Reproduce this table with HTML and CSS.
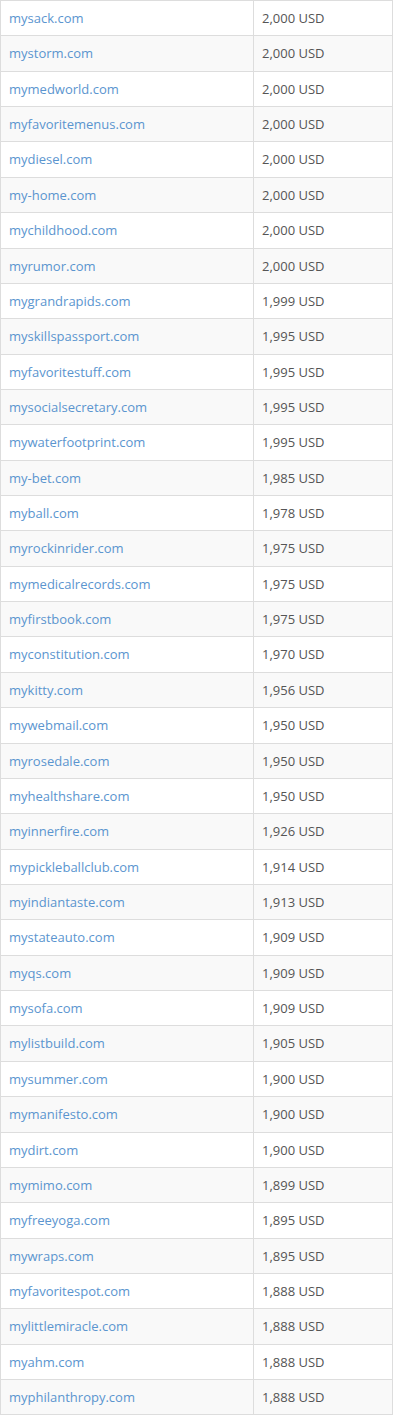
FILE: index.html
```html
<!DOCTYPE html>
<html>
<head>
<meta charset="utf-8">
<link rel="stylesheet" href="styles.css">
</head>
<body>
<table class="domains">
<tbody>
<tr><td><a href="#">mysack.com</a></td><td>2,000 USD</td></tr>
<tr><td><a href="#">mystorm.com</a></td><td>2,000 USD</td></tr>
<tr><td><a href="#">mymedworld.com</a></td><td>2,000 USD</td></tr>
<tr><td><a href="#">myfavoritemenus.com</a></td><td>2,000 USD</td></tr>
<tr><td><a href="#">mydiesel.com</a></td><td>2,000 USD</td></tr>
<tr><td><a href="#">my-home.com</a></td><td>2,000 USD</td></tr>
<tr><td><a href="#">mychildhood.com</a></td><td>2,000 USD</td></tr>
<tr><td><a href="#">myrumor.com</a></td><td>2,000 USD</td></tr>
<tr><td><a href="#">mygrandrapids.com</a></td><td>1,999 USD</td></tr>
<tr><td><a href="#">myskillspassport.com</a></td><td>1,995 USD</td></tr>
<tr><td><a href="#">myfavoritestuff.com</a></td><td>1,995 USD</td></tr>
<tr><td><a href="#">mysocialsecretary.com</a></td><td>1,995 USD</td></tr>
<tr><td><a href="#">mywaterfootprint.com</a></td><td>1,995 USD</td></tr>
<tr><td><a href="#">my-bet.com</a></td><td>1,985 USD</td></tr>
<tr><td><a href="#">myball.com</a></td><td>1,978 USD</td></tr>
<tr><td><a href="#">myrockinrider.com</a></td><td>1,975 USD</td></tr>
<tr><td><a href="#">mymedicalrecords.com</a></td><td>1,975 USD</td></tr>
<tr><td><a href="#">myfirstbook.com</a></td><td>1,975 USD</td></tr>
<tr><td><a href="#">myconstitution.com</a></td><td>1,970 USD</td></tr>
<tr><td><a href="#">mykitty.com</a></td><td>1,956 USD</td></tr>
<tr><td><a href="#">mywebmail.com</a></td><td>1,950 USD</td></tr>
<tr><td><a href="#">myrosedale.com</a></td><td>1,950 USD</td></tr>
<tr><td><a href="#">myhealthshare.com</a></td><td>1,950 USD</td></tr>
<tr><td><a href="#">myinnerfire.com</a></td><td>1,926 USD</td></tr>
<tr><td><a href="#">mypickleballclub.com</a></td><td>1,914 USD</td></tr>
<tr><td><a href="#">myindiantaste.com</a></td><td>1,913 USD</td></tr>
<tr><td><a href="#">mystateauto.com</a></td><td>1,909 USD</td></tr>
<tr><td><a href="#">myqs.com</a></td><td>1,909 USD</td></tr>
<tr><td><a href="#">mysofa.com</a></td><td>1,909 USD</td></tr>
<tr><td><a href="#">mylistbuild.com</a></td><td>1,905 USD</td></tr>
<tr><td><a href="#">mysummer.com</a></td><td>1,900 USD</td></tr>
<tr><td><a href="#">mymanifesto.com</a></td><td>1,900 USD</td></tr>
<tr><td><a href="#">mydirt.com</a></td><td>1,900 USD</td></tr>
<tr><td><a href="#">mymimo.com</a></td><td>1,899 USD</td></tr>
<tr><td><a href="#">myfreeyoga.com</a></td><td>1,895 USD</td></tr>
<tr><td><a href="#">mywraps.com</a></td><td>1,895 USD</td></tr>
<tr><td><a href="#">myfavoritespot.com</a></td><td>1,888 USD</td></tr>
<tr><td><a href="#">mylittlemiracle.com</a></td><td>1,888 USD</td></tr>
<tr><td><a href="#">myahm.com</a></td><td>1,888 USD</td></tr>
<tr><td><a href="#">myphilanthropy.com</a></td><td>1,888 USD</td></tr>
</tbody>
</table>
</body>
</html>
```
FILE: styles.css
```css
html, body {
  margin: 0;
  padding: 0;
  background: #fff;
}
body {
  font-family: "Open Sans", "Liberation Sans", sans-serif;
  font-size: 13px;
  color: #555;
}
.domains {
  width: 393px;
  border-collapse: collapse;
  border: 1px solid #ddd;
}
.domains td {
  border: 1px solid #ddd;
  padding: 8px 8px;
  line-height: 18.36px;
  vertical-align: top;
}
.domains td:first-child {
  width: 236px;
}
.domains tr:nth-child(even) td {
  background: #f9f9f9;
}
.domains a {
  color: #5b95cf;
  text-decoration: none;
}
```
